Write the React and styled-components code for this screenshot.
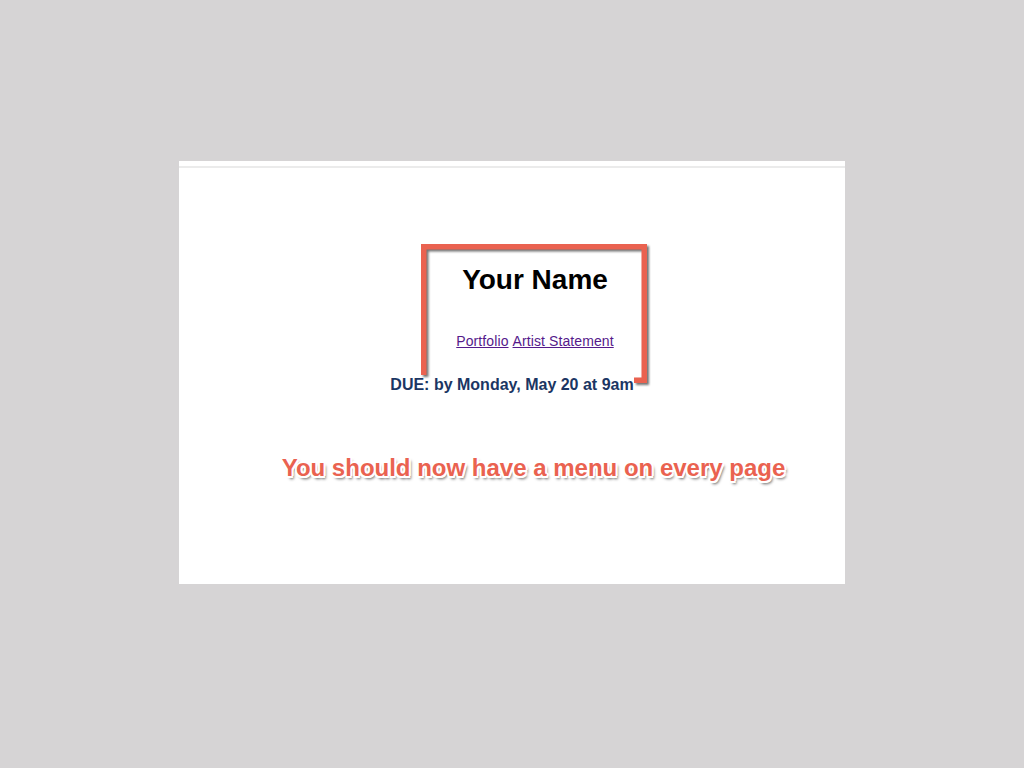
import React from "react";
import styled, { createGlobalStyle } from "styled-components";

const GlobalStyle = createGlobalStyle`
  html, body {
    margin: 0;
    padding: 0;
    background: #d6d4d5;
    font-family: "Liberation Sans", Arial, sans-serif;
  }
`;

const Page = styled.div`
  display: flex;
  justify-content: center;
  padding-top: 161px;
  height: 768px;
  box-sizing: border-box;
`;

const Slide = styled.div`
  position: relative;
  width: 666px;
  height: 423px;
  background: #ffffff;
  padding-top: 5px;
  box-sizing: border-box;
  display: flex;
  flex-direction: column;
`;

const TopRule = styled.div`
  height: 2px;
  background: #ebebeb;
`;

const Content = styled.div`
  display: flex;
  flex-direction: column;
  align-items: center;
  padding-top: 96px;
`;

const Header = styled.header`
  display: flex;
  flex-direction: column;
  align-items: center;
  padding-left: ${(p) => p.$shift || 0}px;
`;

const Title = styled.h1`
  margin: 0;
  font-size: 28px;
  line-height: 32px;
  font-weight: 700;
  color: #000;
`;

const Nav = styled.nav`
  margin-top: 37px;
  font-size: 14px;
  line-height: 16px;
  display: flex;
  gap: 4px;
  letter-spacing: 0.1px;
`;

const NavLink = styled.a`
  color: #551a8b;
  text-decoration: underline;
  cursor: pointer;
`;

const Due = styled.p`
  margin: 27px 0 0;
  font-size: 16px;
  line-height: 18px;
  font-weight: 700;
  color: #1b3663;
`;

const Callout = styled.p`
  margin: 60px 0 0;
  padding-left: 43px;
  font-size: 24px;
  line-height: 28px;
  font-weight: 700;
  color: #ea6250;
  text-shadow:
    -1.5px -1.5px 0 #fff, 1.5px -1.5px 0 #fff, -1.5px 1.5px 0 #fff, 1.5px 1.5px 0 #fff,
    0 -2px 0 #fff, 0 2px 0 #fff, -2px 0 0 #fff, 2px 0 0 #fff,
    2px 3px 3px rgba(0, 0, 0, 0.65);
`;

const Bracket = styled.svg`
  position: absolute;
  left: 242px;
  top: 83px;
  overflow: visible;
  filter: drop-shadow(2px 2px 1px rgba(0, 0, 0, 0.55));
  pointer-events: none;
`;

export default function App() {
  return (
    <>
      <GlobalStyle />
      <Page>
        <Slide>
          <TopRule />
          <Content>
            <Header $shift={46}>
              <Title>Your Name</Title>
              <Nav>
                <NavLink href="#portfolio">Portfolio</NavLink>
                <NavLink href="#statement">Artist Statement</NavLink>
              </Nav>
            </Header>
            <Due>DUE: by Monday, May 20 at 9am</Due>
            <Callout>You should now have a menu on every page</Callout>
          </Content>
          <Bracket width="226" height="139" viewBox="0 0 226 139">
            <path
              d="M2.75 131 V2.75 H223.25 V136.25 H213"
              fill="none"
              stroke="#ea6250"
              strokeWidth="5.5"
              strokeLinejoin="miter"
            />
          </Bracket>
        </Slide>
      </Page>
    </>
  );
}
